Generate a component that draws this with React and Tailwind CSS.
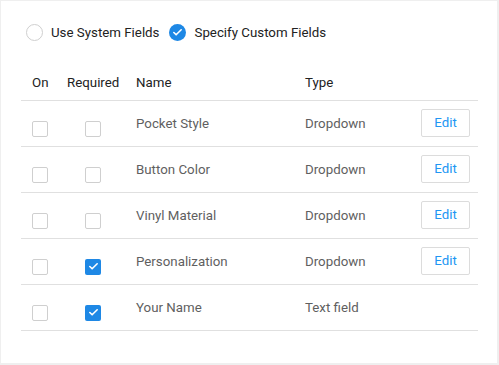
import { Check } from "lucide-react";

const rows = [
  { name: "Pocket Style", type: "Dropdown", required: false, edit: true },
  { name: "Button Color", type: "Dropdown", required: false, edit: true },
  { name: "Vinyl Material", type: "Dropdown", required: false, edit: true },
  { name: "Personalization", type: "Dropdown", required: true, edit: true },
  { name: "Your Name", type: "Text field", required: true, edit: false },
];

function Box({ checked }) {
  if (checked) {
    return (
      <span className="flex h-4 w-4 items-center justify-center rounded-[2px] bg-[#1e88e5]">
        <Check size={11} strokeWidth={3.5} className="text-white" />
      </span>
    );
  }
  return <span className="block h-4 w-4 rounded-[2px] border border-[#cfcfcf] bg-white" />;
}

export default function App() {
  return (
    <div className="h-[365px] w-[499px] bg-[#efefef] p-px font-['Roboto',sans-serif] text-[13.3px]">
      <div className="h-[362px] w-[496px] bg-white">
        <div className="flex items-center pl-[25px] pt-[22px]">
          <span className="block h-[17px] w-[17px] rounded-full border border-[#cfcfcf]" />
          <span className="ml-2 text-[#222]">Use System Fields</span>
          <span className="ml-[10px] flex h-[17px] w-[17px] items-center justify-center rounded-full bg-[#1e88e5]">
            <Check size={11} strokeWidth={3.5} className="text-white" />
          </span>
          <span className="ml-2 text-[#222]">Specify Custom Fields</span>
        </div>

        <div className="ml-[20px] mt-[12px] w-[457px]">
          <div className="flex h-[46px] items-center border-b border-[#e0e0e0] pt-[12px] text-[#222]">
            <span className="w-[46px] pl-[11px]">On</span>
            <span className="w-[69px]">Required</span>
            <span className="w-[169px]">Name</span>
            <span>Type</span>
          </div>
          {rows.map((r) => (
            <div key={r.name} className="flex h-[46px] items-center border-b border-[#e0e0e0] text-[#5f5f5f]">
              <span className="w-[46px] pl-[11px] pt-[11px]">
                <Box checked={false} />
              </span>
              <span className="w-[69px] pl-[18px] pt-[11px]">
                <Box checked={r.required} />
              </span>
              <span className="w-[169px] pt-px">{r.name}</span>
              <span className="w-[116px] pt-px">{r.type}</span>
              {r.edit ? (
                <button
                  type="button"
                  className="h-[28px] w-[49px] rounded-[2px] border border-[#dcdcdc] bg-white text-[#2196f3]"
                >
                  Edit
                </button>
              ) : null}
            </div>
          ))}
        </div>
      </div>
    </div>
  );
}
